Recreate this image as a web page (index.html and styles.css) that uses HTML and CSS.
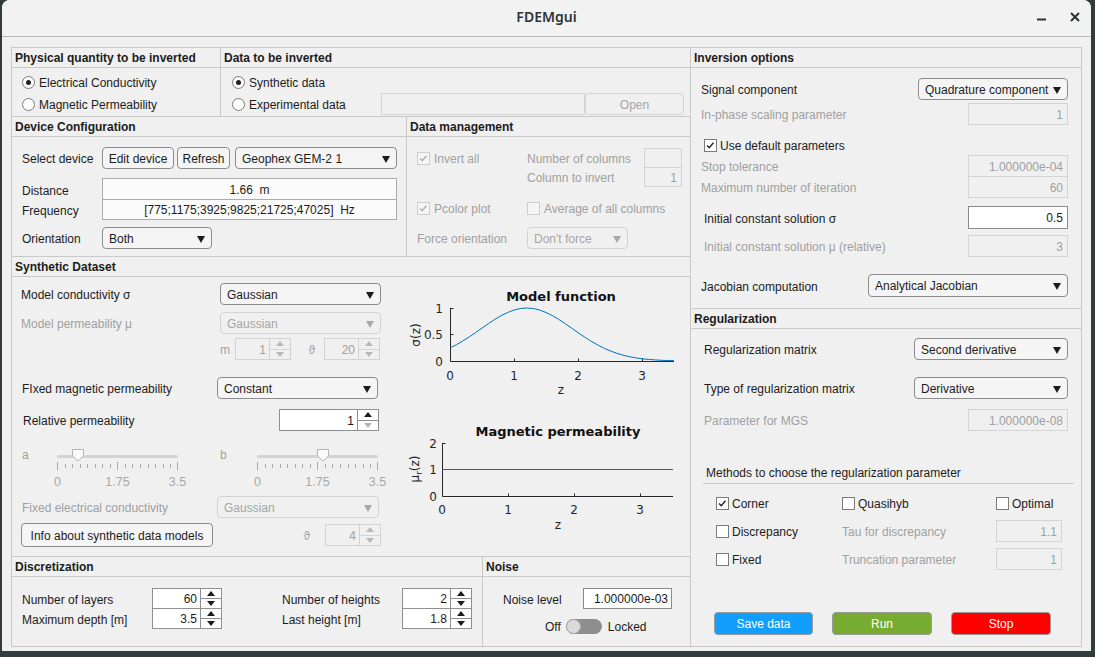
FILE: index.html
```html
<!DOCTYPE html>
<html lang="en">
<head>
    <meta charset="UTF-8">
    <title>FDEMgui</title>
    <link rel="stylesheet" href="styles.css">
</head>
<body>
<div class="window">
    <header class="titlebar">
        <div></div>
        <div class="title">FDEMgui</div>
        <div class="win-btns">
            <svg width="12" height="12" viewBox="0 0 12 12"><path d="M1 8.5h9"/></svg>
            <svg width="12" height="12" viewBox="0 0 12 12"><path d="M2 2l8 8M10 2l-8 8"/></svg>
        </div>
    </header>

    <div class="content">
        <div class="main">
            <!-- Left column -->
            <div class="col-left">
                <div class="row row-1">
                    <section class="panel p-quantity">
                        <h3 class="ph">Physical quantity to be inverted</h3>
                        <div class="pb">
                            <div class="opt"><span class="radio on"></span><span class="t">Electrical Conductivity</span></div>
                            <div class="opt"><span class="radio"></span><span class="t">Magnetic Permeability</span></div>
                        </div>
                    </section>
                    <section class="panel p-data">
                        <h3 class="ph">Data to be inverted</h3>
                        <div class="pb">
                            <div class="opt"><span class="radio on"></span><span class="t">Synthetic data</span></div>
                            <div class="line">
                                <div class="opt w-exp"><span class="radio"></span><span class="t">Experimental data</span></div>
                                <div class="field off w-path"></div>
                                <div class="btn off w-open">Open</div>
                            </div>
                        </div>
                    </section>
                </div>

                <div class="row row-2">
                    <section class="panel p-device">
                        <h3 class="ph">Device Configuration</h3>
                        <div class="pb">
                            <div class="dev-row">
                                <span class="lbl-dev t">Select device</span>
                                <div class="btn w-edit">Edit device</div>
                                <div class="btn w-refresh">Refresh</div>
                                <div class="dd w-device"><span>Geophex GEM-2 1</span><i class="caret"></i></div>
                            </div>
                            <div class="dev-fields">
                                <div class="dev-row f1">
                                    <span class="lbl-dev t">Distance</span>
                                    <div class="field center w-dist">1.66&nbsp; m</div>
                                </div>
                                <div class="dev-row f2">
                                    <span class="lbl-dev t">Frequency</span>
                                    <div class="field center w-dist">[775;1175;3925;9825;21725;47025]&nbsp; Hz</div>
                                </div>
                            </div>
                            <div class="dev-row orient">
                                <span class="lbl-dev t">Orientation</span>
                                <div class="dd w-orient"><span>Both</span><i class="caret"></i></div>
                            </div>
                        </div>
                    </section>
                    <section class="panel p-manage">
                        <h3 class="ph">Data management</h3>
                        <div class="pb dis">
                            <div class="mg-row">
                                <div class="mg-c1"><span class="cb off"><svg viewBox="0 0 13 13"><path d="M2.5 6.5l2.5 2.7 5-6"/></svg></span><span class="t">Invert all</span></div>
                                <div class="mg-c2 t">Number of columns</div>
                                <div class="field off w-col"></div>
                            </div>
                            <div class="mg-row r2">
                                <div class="mg-c1"></div>
                                <div class="mg-c2 t">Column to invert</div>
                                <div class="field off w-col">1</div>
                            </div>
                            <div class="mg-row r3">
                                <div class="mg-c1"><span class="cb off"><svg viewBox="0 0 13 13"><path d="M2.5 6.5l2.5 2.7 5-6"/></svg></span><span class="t">Pcolor plot</span></div>
                                <div class="mg-c2 wide"><span class="cb off"></span><span class="t">Average of all columns</span></div>
                            </div>
                            <div class="mg-row r4">
                                <div class="mg-c1 t">Force orientation</div>
                                <div class="dd off w-force"><span>Don't force</span><i class="caret"></i></div>
                            </div>
                        </div>
                    </section>
                </div>

                <section class="panel synth">
                    <h3 class="ph">Synthetic Dataset</h3>
                    <div class="syn-body">
                        <div class="form-col">
                            <div class="fr r1">
                                <span class="lbl-syn t">Model conductivity σ</span>
                                <div class="dd w-syn"><span>Gaussian</span><i class="caret"></i></div>
                            </div>
                            <div class="fr r2 dis">
                                <span class="lbl-syn t">Model permeability μ</span>
                                <div class="dd off w-syn"><span>Gaussian</span><i class="caret"></i></div>
                            </div>
                            <div class="fr r3 dis">
                                <span class="lbl-syn"></span>
                                <span class="m-cell t">m</span>
                                <div class="spin off w-small"><span class="sv">1</span><span class="sbtn"><i class="up"></i><i class="dn"></i></span></div>
                                <span class="theta-a t">ϑ</span>
                                <div class="spin off w-small"><span class="sv">20</span><span class="sbtn"><i class="up"></i><i class="dn"></i></span></div>
                            </div>
                            <div class="fr r4">
                                <span class="lbl-fix t">FIxed magnetic permeability</span>
                                <div class="dd w-syn"><span>Constant</span><i class="caret"></i></div>
                            </div>
                            <div class="fr r5">
                                <span class="lbl-rel t">Relative permeability</span>
                                <div class="spin w-rel"><span class="sv">1</span><span class="sbtn"><i class="up"></i><i class="dn off-arrow"></i></span></div>
                            </div>
                            <div class="sl-row dis">
                                <span class="sl-lbl">a</span>
                                <svg class="slider" width="121" height="42" viewBox="0 0 121 42">
                                    <rect class="sl-track" x="0" y="6" width="121" height="3" rx="1.5"/>
                                    <path class="sl-minor" d="M8.5 15v4M15.5 15v4M23.5 15v4M30.5 15v4M38.5 15v4M45.5 15v4M53.5 15v4M68.5 15v4M75.5 15v4M83.5 15v4M91.5 15v4M98.5 15v4M106.5 15v4M113.5 15v4"/>
                                    <path class="sl-major" d="M0.5 13v8M60.5 13v8M120.5 13v8"/>
                                    <g class="sl-nums"><text x="0.5" y="37">0</text><text x="60.5" y="37">1.75</text><text x="120.5" y="37">3.5</text></g>
                                    <path class="sl-thumb" d="M15.5 0.5h11v6.5l-5.5 5l-5.5-5z"/>
                                </svg>
                                <span class="sl-lbl b">b</span>
                                <svg class="slider" width="121" height="42" viewBox="0 0 121 42">
                                    <rect class="sl-track" x="0" y="6" width="121" height="3" rx="1.5"/>
                                    <path class="sl-minor" d="M8.5 15v4M15.5 15v4M23.5 15v4M30.5 15v4M38.5 15v4M45.5 15v4M53.5 15v4M68.5 15v4M75.5 15v4M83.5 15v4M91.5 15v4M98.5 15v4M106.5 15v4M113.5 15v4"/>
                                    <path class="sl-major" d="M0.5 13v8M60.5 13v8M120.5 13v8"/>
                                    <g class="sl-nums"><text x="0.5" y="37">0</text><text x="60.5" y="37">1.75</text><text x="120.5" y="37">3.5</text></g>
                                    <path class="sl-thumb" d="M60.5 0.5h11v6.5l-5.5 5l-5.5-5z"/>
                                </svg>
                            </div>
                            <div class="fr r7 dis">
                                <span class="lbl-fix t">Fixed electrical conductivity</span>
                                <div class="dd off w-syn2"><span>Gaussian</span><i class="caret"></i></div>
                            </div>
                            <div class="fr r8">
                                <div class="btn w-info">Info about synthetic data models</div>
                                <span class="theta-b dis t">ϑ</span>
                                <div class="spin off w-small"><span class="sv">4</span><span class="sbtn"><i class="up"></i><i class="dn"></i></span></div>
                            </div>
                        </div>

                        <div class="chart-col">
                            <svg class="plot" width="285" height="115" viewBox="0 0 285 115">
                                <text class="pt" x="161" y="16">Model function</text>
                                <path class="ax" d="M50.5 23V76.5H274M114.5 76v-2.5M178.5 76v-2.5M242.5 76v-2.5M51 23.5h2.5M51 49.5h2.5"/>
                                <g class="tl end"><text x="43" y="27.5">1</text><text x="43" y="54">0.5</text><text x="43" y="80.5">0</text></g>
                                <g class="tl mid"><text x="50" y="94.5">0</text><text x="114" y="94.5">1</text><text x="178" y="94.5">2</text><text x="242" y="94.5">3</text></g>
                                <text class="tl mid" transform="translate(20 50) rotate(-90)">σ(z)</text>
                                <text class="tl mid" x="161" y="109">z</text>
                                <polyline class="curve" points="50,63 56.4,59.7 62.8,56 69.2,51.9 75.6,47.6 82,43.1 88.4,38.7 94.8,34.4 101.2,30.6 107.6,27.5 114,25 120.4,23.5 126.8,23 133.2,23.5 139.6,25 146,27.5 152.4,30.6 158.8,34.4 165.2,38.7 171.6,43.1 178,47.6 184.4,51.9 190.8,56 197.2,59.7 203.6,63 210,65.8 216.4,68.2 222.8,70.1 229.2,71.7 235.6,72.8 242,73.8 248.4,74.4 254.8,74.9 261.2,75.3 267.6,75.5 274,75.7"/>
                            </svg>
                            <svg class="plot p2" width="285" height="115" viewBox="0 0 285 115">
                                <text class="pt" x="158" y="15.5">Magnetic permeability</text>
                                <path class="ax" d="M42.5 23V76.5H273M108.5 76v-2.5M174.5 76v-2.5M240.5 76v-2.5M43 23.5h2.5M43 49.5h2.5"/>
                                <g class="tl end"><text x="37" y="27.5">2</text><text x="37" y="54">1</text><text x="37" y="80.5">0</text></g>
                                <g class="tl mid"><text x="42" y="93.5">0</text><text x="108" y="93.5">1</text><text x="174" y="93.5">2</text><text x="240" y="93.5">3</text></g>
                                <text class="tl mid" transform="translate(19 49) rotate(-90)">μ<tspan class="sub" dy="3">r</tspan><tspan dy="-3">(z)</tspan></text>
                                <text class="tl mid" x="158" y="108.5">z</text>
                                <path class="curve" d="M42 49.5H273"/>
                            </svg>
                        </div>
                    </div>
                </section>

                <div class="row row-4">
                    <section class="panel p-discr">
                        <h3 class="ph">Discretization</h3>
                        <div class="pb dz">
                            <div class="dz-g">
                                <div class="dz-row"><span class="dz-l1 t">Number of layers</span>
                                    <div class="spin w-dz"><span class="sv">60</span><span class="sbtn"><i class="up"></i><i class="dn"></i></span></div></div>
                                <div class="dz-row r2"><span class="dz-l1 t">Maximum depth [m]</span>
                                    <div class="spin w-dz"><span class="sv">3.5</span><span class="sbtn"><i class="up"></i><i class="dn"></i></span></div></div>
                            </div>
                            <div class="dz-g g2">
                                <div class="dz-row"><span class="dz-l2 t">Number of heights</span>
                                    <div class="spin w-dz"><span class="sv">2</span><span class="sbtn"><i class="up"></i><i class="dn"></i></span></div></div>
                                <div class="dz-row r2"><span class="dz-l2 t">Last height [m]</span>
                                    <div class="spin w-dz"><span class="sv">1.8</span><span class="sbtn"><i class="up"></i><i class="dn"></i></span></div></div>
                            </div>
                        </div>
                    </section>
                    <section class="panel p-noise">
                        <h3 class="ph">Noise</h3>
                        <div class="pb nz">
                            <div class="nz-row">
                                <span class="nz-lbl t">Noise level</span>
                                <div class="field edit w-noise">1.000000e-03</div>
                            </div>
                            <div class="nz-row sw-row">
                                <span class="sw-off t">Off</span>
                                <span class="switch"><span class="knob"></span></span>
                                <span class="t">Locked</span>
                            </div>
                        </div>
                    </section>
                </div>
            </div>

            <!-- Right column -->
            <div class="col-right">
                <section class="panel p-inv">
                    <h3 class="ph">Inversion options</h3>
                    <div class="pb ib">
                        <div class="ir r1">
                            <span class="t">Signal component</span>
                            <div class="dd w-signal"><span>Quadrature component</span><i class="caret"></i></div>
                        </div>
                        <div class="ir r2 dis">
                            <span class="t">In-phase scaling parameter</span>
                            <div class="field off w-num">1</div>
                        </div>
                        <div class="ir r3">
                            <div class="chk"><span class="cb"><svg viewBox="0 0 13 13"><path d="M2.5 6.5l2.5 2.7 5-6"/></svg></span><span class="t">Use default parameters</span></div>
                        </div>
                        <div class="ir r4 dis">
                            <span class="t">Stop tolerance</span>
                            <div class="field off w-num">1.000000e-04</div>
                        </div>
                        <div class="ir r5 dis">
                            <span class="t">Maximum number of iteration</span>
                            <div class="field off w-num">60</div>
                        </div>
                        <div class="ir r6">
                            <span class="ind t">Initial constant solution σ</span>
                            <div class="field edit w-num">0.5</div>
                        </div>
                        <div class="ir r7 dis">
                            <span class="ind t">Initial constant solution μ (relative)</span>
                            <div class="field off w-num">3</div>
                        </div>
                        <div class="ir r8">
                            <span class="t">Jacobian computation</span>
                            <div class="dd w-jac"><span>Analytical Jacobian</span><i class="caret"></i></div>
                        </div>
                    </div>
                </section>
                <section class="panel p-reg">
                    <h3 class="ph">Regularization</h3>
                    <div class="pb rb">
                        <div class="ir g1">
                            <span class="t">Regularization matrix</span>
                            <div class="dd w-reg"><span>Second derivative</span><i class="caret"></i></div>
                        </div>
                        <div class="ir g2">
                            <span class="t">Type of regularization matrix</span>
                            <div class="dd w-reg"><span>Derivative</span><i class="caret"></i></div>
                        </div>
                        <div class="ir g3 dis">
                            <span class="t">Parameter for MGS</span>
                            <div class="field off w-num">1.000000e-08</div>
                        </div>

                        <div class="sub-head">Methods to choose the regularization parameter</div>
                        <div class="mt-row m1">
                            <div class="mt-c1 chk"><span class="cb"><svg viewBox="0 0 13 13"><path d="M2.5 6.5l2.5 2.7 5-6"/></svg></span><span class="t">Corner</span></div>
                            <div class="mt-c2 chk"><span class="cb"></span><span class="t">Quasihyb</span></div>
                            <div class="chk"><span class="cb"></span><span class="t">Optimal</span></div>
                        </div>
                        <div class="mt-row m2">
                            <div class="mt-c1 chk"><span class="cb"></span><span class="t">Discrepancy</span></div>
                            <div class="mt-c2 dis t">Tau for discrepancy</div>
                            <div class="field off w-mt">1.1</div>
                        </div>
                        <div class="mt-row m3">
                            <div class="mt-c1 chk"><span class="cb"></span><span class="t">Fixed</span></div>
                            <div class="mt-c2 dis t">Truncation parameter</div>
                            <div class="field off w-mt">1</div>
                        </div>

                        <div class="actions">
                            <div class="btn act save">Save data</div>
                            <div class="btn act run">Run</div>
                            <div class="btn act stop">Stop</div>
                        </div>
                    </div>
                </section>
            </div>
        </div>
    </div>
</div>
</body>
</html>
```

FILE: styles.css
```css
* {
    box-sizing: border-box;
}

body {
    margin: 0;
    background: #2f3d3e;
    font-family: "Liberation Sans", Arial, sans-serif;
    font-size: 12px;
    color: #1c1c1c;
}

.window {
    margin-left: 2px;
    width: 1089px;
    height: 651px;
    background: #f0f0f0;
    border-radius: 8px 8px 0 0;
    overflow: hidden;
}

/* Title bar */
.titlebar {
    height: 37px;
    display: grid;
    grid-template-columns: 1fr auto 1fr;
    align-items: center;
    background: #f2f2f2;
    border-bottom: 1px solid #b9b9b9;
}

.title {
    font-family: "Noto Sans", sans-serif;
    font-size: 14px;
    font-weight: 600;
    color: #2e3436;
    padding-bottom: 3px;
}

.win-btns {
    justify-self: end;
    display: flex;
    align-items: center;
    gap: 21px;
    padding-right: 10px;
    padding-bottom: 2px;
}

.win-btns svg {
    fill: none;
    stroke: #2e3436;
    stroke-width: 2;
}

/* Layout */
.content {
    padding: 10px 0 0 9px;
}

.main {
    display: flex;
    width: 1071px;
    height: 600px;
    border: 1px solid #c9c9c9;
}

.col-left {
    width: 679px;
    display: flex;
    flex-direction: column;
    border-right: 1px solid #c9c9c9;
}

.col-right {
    width: 390px;
    display: flex;
    flex-direction: column;
}

.row {
    display: flex;
    border-bottom: 1px solid #c9c9c9;
}

.row-1 { height: 69px; }
.row-2 { height: 140px; }
.row-4 { height: 89px; border-bottom: none; }

.panel {
    display: flex;
    flex-direction: column;
}

.ph {
    margin: 0;
    height: 20px;
    padding-left: 3px;
    font-size: 12px;
    font-weight: bold;
    line-height: 21px;
    border-bottom: 1px solid #c9c9c9;
}

.p-quantity { width: 209px; border-right: 1px solid #c9c9c9; }
.p-data { flex: 1; }
.p-device { width: 395px; border-right: 1px solid #c9c9c9; }
.p-manage { flex: 1; }
.p-discr { width: 471px; border-right: 1px solid #c9c9c9; }
.p-noise { flex: 1; }
.p-inv { height: 261px; border-bottom: 1px solid #c9c9c9; }
.p-reg { flex: 1; }
.synth { height: 300px; border-bottom: 1px solid #c9c9c9; }

.dis { color: #a0a0a0; }

/* labels sit one pixel lower than the box centre, as in the app */
.t { padding-top: 2px; }

/* Generic controls */
.opt {
    display: flex;
    align-items: center;
    height: 22px;
}

.radio {
    flex: none;
    display: grid;
    place-items: center;
    width: 13px;
    height: 13px;
    margin-right: 4px;
    border: 1px solid #7b7b7b;
    border-radius: 50%;
    background: #fff;
}

.radio.on::after {
    content: '';
    width: 5px;
    height: 5px;
    border-radius: 50%;
    background: #202020;
}

.cb {
    flex: none;
    display: inline-block;
    width: 13px;
    height: 13px;
    margin-right: 4px;
    border: 1px solid #7b7b7b;
    background: #fff;
}

.cb svg {
    display: block;
    width: 11px;
    height: 11px;
    fill: none;
    stroke: #202020;
    stroke-width: 1.6;
}

.cb.off {
    border-color: #cdcdcd;
    background: #f5f5f5;
}

.cb.off svg {
    stroke: #b0b0b0;
}

.chk {
    display: flex;
    align-items: center;
}

.btn {
    display: flex;
    align-items: center;
    justify-content: center;
    height: 22px;
    padding-top: 1px;
    border: 1px solid #8c8c8c;
    border-radius: 4px;
    background: #f5f5f5;
}

.btn.off {
    border-color: #d3d3d3;
    color: #a5a5a5;
    background: #f0f0f0;
}

.field {
    height: 22px;
    padding: 0 4px;
    border: 1px solid #ababab;
    background: #fbfbfb;
    line-height: 22px;
    text-align: right;
    white-space: nowrap;
}

.field.center { text-align: center; }

.field.off {
    border-color: #d4d4d4;
    background: #f0f0f0;
    color: #a0a0a0;
}

.field.edit {
    border-color: #8a8a8a;
    background: #fff;
    color: #1c1c1c;
}

.dd {
    display: flex;
    align-items: center;
    justify-content: space-between;
    height: 22px;
    padding: 1px 6px 0 6px;
    border: 1px solid #8c8c8c;
    border-radius: 4px;
    background: #f5f5f5;
    white-space: nowrap;
}

.caret {
    margin-top: 1px;
    border-left: 4px solid transparent;
    border-right: 4px solid transparent;
    border-top: 7px solid #1c1c1c;
}

.dd.off {
    border-color: #d3d3d3;
    color: #a5a5a5;
    background: #f0f0f0;
}

.dd.off .caret { border-top-color: #a8a8a8; }

.spin {
    display: flex;
    height: 22px;
    border: 1px solid #8f8f8f;
    background: #fff;
}

.sv {
    flex: 1;
    padding-right: 3px;
    line-height: 22px;
    text-align: right;
}

.sbtn {
    display: flex;
    flex-direction: column;
    width: 21px;
    border-left: 1px solid #8f8f8f;
}

.sbtn i {
    flex: 1;
    display: grid;
    place-items: center;
}

.sbtn i + i { border-top: 1px solid #8f8f8f; }

.sbtn i::after {
    content: '';
    border-left: 4px solid transparent;
    border-right: 4px solid transparent;
}

.up::after { border-bottom: 5px solid #1c1c1c; }
.dn::after { border-top: 5px solid #1c1c1c; }
.dn.off-arrow::after { border-top-color: #b5b5b5; }

.spin.off {
    border-color: #d3d3d3;
    background: #f0f0f0;
    color: #a0a0a0;
}

.spin.off .sbtn,
.spin.off .sbtn i + i { border-color: #d3d3d3; }
.spin.off .up::after { border-bottom-color: #b8b8b8; }
.spin.off .dn::after { border-top-color: #b8b8b8; }

/* Data to be inverted */
.p-quantity .pb { padding: 3px 0 0 10px; }
.p-data .pb { padding: 3px 0 0 11px; }

.line {
    display: flex;
    align-items: center;
}

.w-exp { width: 149px; }
.w-path { width: 204px; }
.w-open { width: 99px; height: 22px; }

/* Device configuration */
.p-device .pb { padding: 10px 0 0 10px; }

.dev-row {
    display: flex;
    align-items: center;
    height: 22px;
}

.lbl-dev { width: 80px; }
.w-edit { width: 72px; margin-right: 3px; }
.w-refresh { width: 53px; margin-right: 5px; }
.w-device { width: 162px; }
.dev-fields { margin-top: 9px; }
.w-dist { width: 295px; }
.dev-row.f2 { margin-top: -1px; height: 21px; }
.dev-row.f2 .field { height: 21px; line-height: 20px; }
.dev-row.f1 .lbl-dev { padding-top: 4px; }
.orient { margin-top: 7px; }
.w-orient { width: 110px; }

/* Data management */
.p-manage .pb { padding: 11px 0 0 10px; }

.mg-row {
    display: flex;
    align-items: center;
    height: 20px;
}

.mg-row.r2 { margin-top: -1px; }
.mg-row.r3 { margin-top: 11px; }
.mg-row.r4 { margin-top: 9px; height: 22px; }

.mg-c1 { width: 110px; display: flex; align-items: center; }
.mg-c2 { width: 117px; display: flex; align-items: center; }
.mg-c2.wide { width: auto; }
.w-col { width: 38px; height: 20px; line-height: 20px; }
.w-force { width: 101px; }

/* Synthetic dataset */
.syn-body {
    flex: 1;
    display: flex;
}

.form-col {
    width: 388px;
    padding-left: 9px;
}

.fr {
    display: flex;
    align-items: center;
    height: 22px;
}

.fr.r1 { margin-top: 6px; }
.fr.r2 { margin-top: 7px; }
.fr.r3 { margin-top: 4px; }
.fr.r4 { margin-top: 17px; }
.fr.r5 { margin-top: 10px; }
.fr.r7 { margin-top: 5px; }
.fr.r8 { margin-top: 5px; height: 24px; }

.lbl-syn { width: 199px; }
.lbl-fix { width: 196px; padding-left: 1px; }
.lbl-rel { width: 258px; padding-left: 2px; }
.w-syn { width: 161px; }
.w-syn2 { width: 162px; }
.m-cell { width: 15px; }
.theta-a { width: 33px; padding-right: 9px; text-align: right; }
.theta-b { width: 112px; padding-right: 15px; text-align: right; }
.w-small { width: 56px; }
.w-rel { width: 100px; }
.w-info { width: 192px; height: 24px; }

.sl-row {
    display: flex;
    height: 42px;
    margin-top: 18px;
}

.sl-lbl { width: 36px; line-height: 13px; padding-left: 1px; }
.sl-lbl.b { width: 37px; margin-left: 42px; padding-left: 0; }

.slider { overflow: visible; }
.sl-track { fill: #d3d3d3; }
.sl-minor, .sl-major { stroke: #a9a9a9; stroke-width: 1; }
.sl-thumb { fill: #fafafa; stroke: #b5b5b5; stroke-width: 1; }

.sl-nums {
    fill: #a8a8a8;
    font-family: "Liberation Sans", Arial, sans-serif;
    font-size: 12.5px;
    text-anchor: middle;
}

.chart-col {
    flex: 1;
    padding-top: 8px;
}

.plot {
    display: block;
    overflow: visible;
}

.plot.p2 { margin-top: 20px; }

.pt {
    font-family: "DejaVu Sans", sans-serif;
    font-size: 13px;
    font-weight: bold;
    fill: #111;
    text-anchor: middle;
}

.tl {
    font-family: "DejaVu Sans", sans-serif;
    font-size: 12px;
    fill: #262626;
}

.tl.end { text-anchor: end; }
.tl.mid { text-anchor: middle; }
.sub { font-size: 9px; }

.ax {
    fill: none;
    stroke: #262626;
    stroke-width: 1;
}

.curve {
    fill: none;
    stroke: #0072bd;
    stroke-width: 1;
}

/* Discretization */
.dz {
    display: flex;
    padding: 11px 0 0 10px;
}

.dz-row {
    display: flex;
    align-items: center;
    height: 21px;
}

.dz-row.r2 { margin-top: -1px; }
.dz-row .spin { height: 21px; }
.dz-row .sv { line-height: 21px; }
.dz-l1 { width: 130px; }
.dz-l2 { width: 120px; }
.w-dz { width: 70px; }
.dz-g.g2 { margin-left: 60px; }

/* Noise */
.nz { padding: 11px 0 0 20px; }

.nz-row {
    display: flex;
    align-items: center;
    height: 21px;
}

.nz-lbl { width: 80px; }
.w-noise { width: 89px; height: 21px; line-height: 21px; padding: 0 3px; }

.sw-row {
    height: 16px;
    margin-top: 9px;
}

.sw-off { margin-left: 42px; margin-right: 5px; }

.switch {
    display: flex;
    align-items: center;
    width: 36px;
    height: 15px;
    margin-right: 6px;
    border-radius: 8px;
    background: #8e8e8e;
}

.knob {
    width: 15px;
    height: 15px;
    border: 1px solid #a8a8a8;
    border-radius: 50%;
    background: #dadada;
}

/* Inversion options */
.ib { padding: 0 13px 0 10px; }

.ir {
    display: flex;
    align-items: center;
    justify-content: space-between;
    height: 22px;
}

.ib .r1 { margin-top: 10px; }
.ib .r2 { margin-top: 3px; }
.ib .r3 { margin-top: 10px; height: 20px; }
.ib .r3 .chk { margin-left: 3px; }
.ib .r3 .cb { margin-right: 3px; }
.ib .r5 { margin-top: -1px; }
.ib .r6 { margin-top: 8px; height: 23px; }
.ib .r6 .field { height: 23px; line-height: 23px; }
.ib .r7 { margin-top: 6px; }
.ib .r8 { margin-top: 17px; height: 23px; }
.ib .r8 .dd { height: 23px; }
.ind { margin-left: 3px; }

.w-signal { width: 150px; }
.w-num { width: 100px; }
.w-jac { width: 200px; }

/* Regularization */
.rb { padding: 0 7px 0 12px; }
.rb .ir { padding: 0 6px 0 1px; }
.rb .g1 { margin-top: 9px; }
.rb .g2 { margin-top: 17px; }
.rb .g3 { margin-top: 10px; }
.w-reg { width: 154px; }

.sub-head {
    height: 21px;
    margin-top: 32px;
    padding-left: 3px;
    line-height: 21px;
    border-bottom: 1px solid #c9c9c9;
}

.mt-row {
    display: flex;
    align-items: center;
    height: 22px;
    padding-left: 13px;
}

.mt-row.m1 { margin-top: 8px; }
.mt-row.m2,
.mt-row.m3 { margin-top: 6px; }
.mt-c1 { width: 126px; }
.mt-c2 { width: 154px; }
.mt-row .cb { margin-right: 3px; }
.w-mt { width: 66px; }

.actions {
    display: flex;
    gap: 19px;
    margin-top: 42px;
    padding-left: 11px;
}

.act {
    width: 100px;
    height: 23px;
    border-color: #9a9a9a;
    color: #fff;
}

.act.save { width: 99px; background: #129eff; }
.act.run { background: #77ac30; }
.act.stop { background: #ff0000; }
```
